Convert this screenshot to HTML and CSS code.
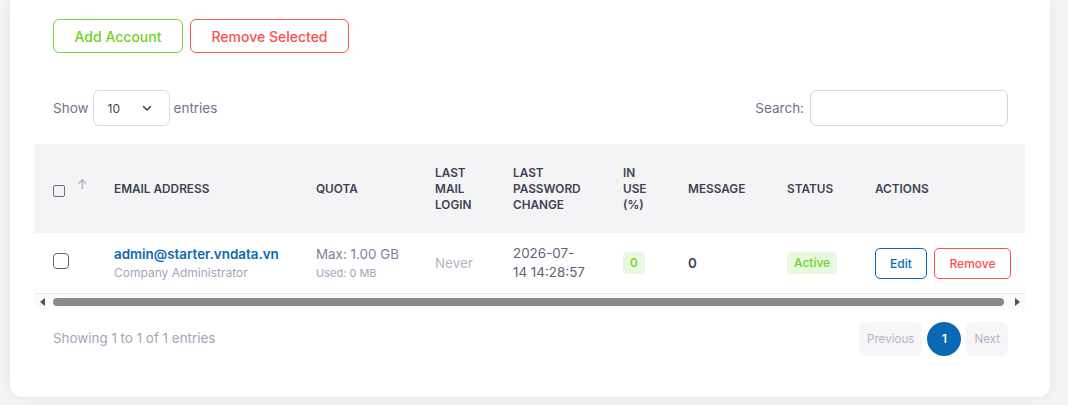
FILE: index.html
```html
<!DOCTYPE html>
<html lang="en">
<head>
    <meta charset="UTF-8">
    <meta name="viewport" content="width=device-width, initial-scale=1.0">
    <title>Mail Accounts</title>
    <link rel="stylesheet" href="styles.css">
</head>
<body>
    <div class="card">
        <!-- Top actions -->
        <div class="toolbar">
            <button class="btn btn-green">Add Account</button>
            <button class="btn btn-red">Remove Selected</button>
        </div>

        <!-- Length + search -->
        <div class="table-controls">
            <label class="length">
                Show
                <span class="select">
                    <span>10</span>
                    <svg width="12" height="12" viewBox="0 0 12 12"><path d="M2.5 4.5 6 8l3.5-3.5" fill="none" stroke="#3f4254" stroke-width="1.5" stroke-linecap="round" stroke-linejoin="round"/></svg>
                </span>
                entries
            </label>
            <label class="search">
                Search:
                <input type="text">
            </label>
        </div>

        <div class="table-wrap">
            <table class="accounts">
                <colgroup>
                    <col style="width: 69px">
                    <col style="width: 202px">
                    <col style="width: 119px">
                    <col style="width: 78px">
                    <col style="width: 110px">
                    <col style="width: 65px">
                    <col style="width: 99px">
                    <col style="width: 88px">
                    <col style="width: 177px">
                </colgroup>
                <thead>
                    <tr>
                        <th class="check-col">
                            <input type="checkbox" class="check-sm">
                            <span class="sort">&#8593;</span>
                        </th>
                        <th>Email Address</th>
                        <th>Quota</th>
                        <th>Last<br>Mail<br>Login</th>
                        <th>Last<br>Password<br>Change</th>
                        <th>In<br>Use<br>(%)</th>
                        <th>Message</th>
                        <th>Status</th>
                        <th>Actions</th>
                    </tr>
                </thead>
                <tbody>
                    <tr>
                        <td class="check-col"><input type="checkbox" class="check"></td>
                        <td>
                            <div class="email">admin@starter.vndata.vn</div>
                            <div class="role">Company Administrator</div>
                        </td>
                        <td>
                            <div class="quota">Max: 1.00 GB</div>
                            <div class="used">Used: 0 MB</div>
                        </td>
                        <td class="muted">Never</td>
                        <td class="date">2026-07-<br>14 14:28:57</td>
                        <td><span class="badge">0</span></td>
                        <td class="msg">0</td>
                        <td><span class="badge">Active</span></td>
                        <td>
                            <div class="actions">
                                <button class="btn-sm btn-blue">Edit</button>
                                <button class="btn-sm btn-red">Remove</button>
                            </div>
                        </td>
                    </tr>
                </tbody>
            </table>
        </div>

        <!-- horizontal scrollbar of the table -->
        <div class="scrollbar">
            <svg width="5" height="8" viewBox="0 0 5 8"><path d="M5 0v8L0 4z" fill="#505050"/></svg>
            <div class="thumb"></div>
            <svg width="5" height="8" viewBox="0 0 5 8"><path d="M0 0v8l5-4z" fill="#505050"/></svg>
        </div>

        <div class="table-footer">
            <div class="info">Showing 1 to 1 of 1 entries</div>
            <div class="pager">
                <span class="page-btn disabled">Previous</span>
                <span class="page-btn current">1</span>
                <span class="page-btn disabled">Next</span>
            </div>
        </div>
    </div>
</body>
</html>
```

FILE: styles.css
```css
body {
    font-family: Inter, "Noto Sans", sans-serif;
    margin: 0;
    padding: 0 18px 8px 10px;
    background-color: #f3f3f6;
    color: #3f4254;
}

.card {
    background-color: #fff;
    border-radius: 0 0 12px 12px;
    box-shadow: 0 0 12px rgba(0, 0, 0, 0.06);
    padding: 19px 25px 41px;
}

.toolbar {
    display: flex;
    gap: 7px;
    padding-left: 18px;
}

.btn {
    height: 34px;
    padding: 0 20px;
    font-family: inherit;
    font-size: 14px;
    font-weight: 500;
    background: #fff;
    border-radius: 6px;
    cursor: pointer;
}

.btn-green {
    width: 130px;
    color: #6fd12a;
    border: 1px solid #74d63a;
}

.btn-red {
    color: #f8524c;
    border: 1px solid #f8524c;
}

.toolbar .btn-red {
    width: 159px;
}

.table-controls {
    display: flex;
    justify-content: space-between;
    align-items: center;
    margin-top: 37px;
    padding-left: 18px;
    padding-right: 17px;
    font-size: 13.5px;
    color: #707488;
}

.length, .search {
    display: flex;
    align-items: center;
    gap: 4px;
}

.select {
    display: flex;
    align-items: center;
    justify-content: space-between;
    box-sizing: border-box;
    width: 77px;
    height: 36px;
    padding: 0 16px 0 14px;
    border: 1px solid #dcdce2;
    border-radius: 6px;
    font-size: 12px;
    color: #3f4254;
}

.search input {
    box-sizing: border-box;
    width: 198px;
    height: 36px;
    border: 1px solid #d6d6dc;
    border-radius: 6px;
    outline: none;
    margin-left: 2px;
}

.table-wrap {
    margin-top: 18px;
    overflow: hidden;
}

.accounts {
    width: 1007px;
    table-layout: fixed;
    border-collapse: collapse;
}

.accounts th {
    background-color: #f4f4f6;
    text-align: left;
    font-size: 11.8px;
    font-weight: 600;
    line-height: 16px;
    text-transform: uppercase;
    color: #3f4254;
    padding: 0 10px;
    height: 89px;
}

.accounts td {
    padding: 0 10px;
    height: 60px;
    font-size: 13.4px;
    border-bottom: 1px solid #e6e6ea;
}

.accounts .check-col {
    padding-left: 18px;
}

.check-sm {
    appearance: none;
    width: 12px;
    height: 12px;
    margin: 0 0 3px;
    border: 1px solid #6d7083;
    border-radius: 2px;
    vertical-align: middle;
}

.sort {
    font-size: 12.5px;
    color: #a1a5b7;
    font-weight: 400;
    margin-left: 9px;
    vertical-align: 7px;
}

.check {
    appearance: none;
    display: block;
    width: 16px;
    height: 16px;
    margin: 0 0 4px;
    border: 1.5px solid #5e6278;
    border-radius: 4px;
}

.email {
    color: #0b69b4;
    font-weight: 600;
    line-height: 20px;
}

.role {
    font-size: 12px;
    color: #a1a5b7;
    line-height: 18px;
}

.quota {
    color: #7e8299;
    line-height: 20px;
}

.used {
    font-size: 11px;
    color: #a1a5b7;
    line-height: 18px;
}

.muted {
    color: #b5b5c3;
}

.date {
    color: #5e6278;
    line-height: 19px;
}

.msg {
    font-weight: 600;
}

.badge {
    display: inline-block;
    padding: 4px 7px;
    font-size: 12px;
    font-weight: 500;
    line-height: 14px;
    color: #6fd12a;
    background-color: #e8f9df;
    border-radius: 4px;
}

.actions {
    display: flex;
    gap: 7px;
}

.btn-sm {
    height: 31px;
    padding: 0 14px;
    font-family: inherit;
    font-size: 12px;
    font-weight: 500;
    background: #fff;
    border-radius: 5px;
    cursor: pointer;
}

.btn-blue {
    width: 52px;
    color: #0b69b4;
    border: 1px solid #0b69b4;
}

.btn-sm.btn-red {
    width: 77px;
}

.scrollbar {
    display: flex;
    align-items: center;
    gap: 8px;
    height: 15px;
    padding: 0 5px;
    background-color: #fafafa;
}

.thumb {
    flex: 1;
    height: 8px;
    margin-right: 3px;
    border-radius: 4px;
    background-color: #8a8a8a;
}

.table-footer {
    display: flex;
    justify-content: space-between;
    align-items: center;
    margin-top: 13px;
    padding-left: 18px;
    padding-right: 17px;
}

.info {
    font-size: 13.4px;
    color: #a1a5b7;
    margin-top: -3px;
}

.pager {
    display: flex;
    gap: 5px;
}

.page-btn {
    display: flex;
    align-items: center;
    justify-content: center;
    height: 34px;
    min-width: 34px;
    box-sizing: border-box;
    padding: 0 8px;
    font-size: 11.6px;
    border-radius: 6px;
}

.page-btn.disabled {
    background-color: #f6f6f8;
    color: #b5b5c3;
}

.page-btn.current {
    background-color: #0b69b4;
    color: #fff;
    font-weight: 600;
    border-radius: 50%;
    padding: 0;
}
```
